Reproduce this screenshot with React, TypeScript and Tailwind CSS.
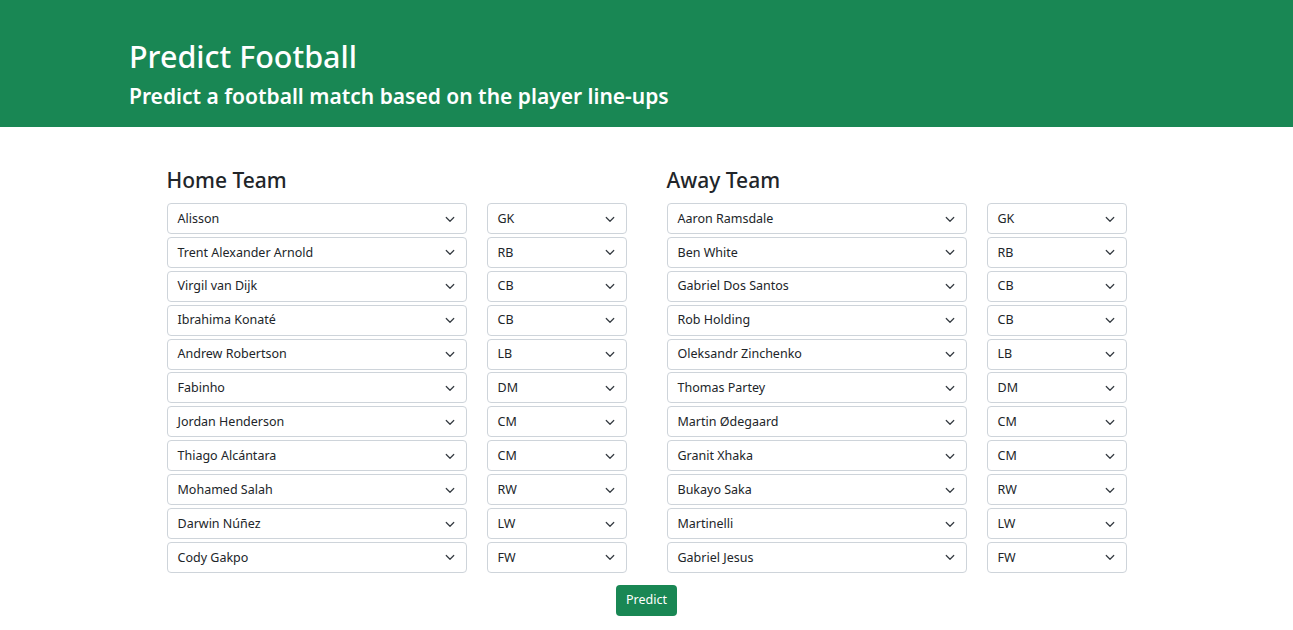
import React from "react";

const home: [string, string][] = [
  ["Alisson", "GK"],
  ["Trent Alexander Arnold", "RB"],
  ["Virgil van Dijk", "CB"],
  ["Ibrahima Konaté", "CB"],
  ["Andrew Robertson", "LB"],
  ["Fabinho", "DM"],
  ["Jordan Henderson", "CM"],
  ["Thiago Alcántara", "CM"],
  ["Mohamed Salah", "RW"],
  ["Darwin Núñez", "LW"],
  ["Cody Gakpo", "FW"],
];

const away: [string, string][] = [
  ["Aaron Ramsdale", "GK"],
  ["Ben White", "RB"],
  ["Gabriel Dos Santos", "CB"],
  ["Rob Holding", "CB"],
  ["Oleksandr Zinchenko", "LB"],
  ["Thomas Partey", "DM"],
  ["Martin Ødegaard", "CM"],
  ["Granit Xhaka", "CM"],
  ["Bukayo Saka", "RW"],
  ["Martinelli", "LW"],
  ["Gabriel Jesus", "FW"],
];

const Chevron = () => (
  <svg width="16" height="12" viewBox="0 0 16 16" fill="none">
    <path d="m3 6 5 5 5-5" stroke="#343a40" strokeWidth="1.6" strokeLinecap="round" strokeLinejoin="round" />
  </svg>
);

const FakeSelect = ({ value, width }: { value: string; width: string }) => {
  return (
    <div
      className={`${width} h-[31px] flex items-center justify-between pl-[10px] pr-[8px] border border-[#ced4da] rounded-[4px] bg-white text-[12.5px] text-[#212529]`}
    >
      <span className="pt-[1px]">{value}</span>
      <Chevron />
    </div>
  );
};

const TeamColumn = ({ title, players }: { title: string; players: [string, string][] }) => {
  return (
    <div className="w-[460px] flex flex-col">
      <h2 className="text-[21px] font-medium leading-[26px] text-[#212529] mb-[10px]">{title}</h2>
      <div className="flex flex-col gap-[2.9px]">
        {players.map(([name, pos], i) => (
          <div className="flex gap-[20px]" key={i}>
            <FakeSelect value={name} width="w-[300px]" />
            <FakeSelect value={pos} width="w-[140px]" />
          </div>
        ))}
      </div>
    </div>
  );
};

export default function App() {
  return (
    <div className="min-h-screen bg-white" style={{ fontFamily: '"Noto Sans", "Open Sans", sans-serif' }}>
      <header className="bg-[#198754] h-[127px] pl-[129px] pt-[36px] text-white">
        <h1 className="text-[30.5px] font-medium leading-[40px]">Predict Football</h1>
        <p className="text-[21px] font-semibold leading-[30px] mt-[5px]">Predict a football match based on the player line-ups</p>
      </header>
      <main className="w-[960px] mx-auto pt-[40px]">
        <div className="flex gap-[40px]">
          <TeamColumn title="Home Team" players={home} />
          <TeamColumn title="Away Team" players={away} />
        </div>
        <div className="flex justify-center mt-[12px]">
          <button className="h-[31px] px-[10px] rounded-[4px] bg-[#198754] text-white text-[12.5px]">Predict</button>
        </div>
      </main>
    </div>
  );
}
